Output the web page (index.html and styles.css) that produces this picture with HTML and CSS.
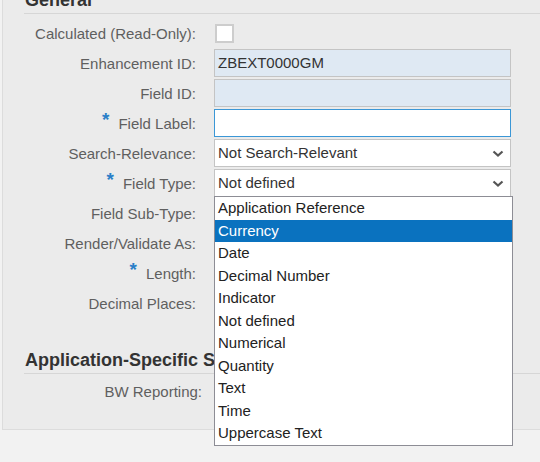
FILE: index.html
```html
<!DOCTYPE html>
<html lang="en">
<head>
    <meta charset="UTF-8">
    <meta name="viewport" content="width=device-width, initial-scale=1.0">
    <title>Extension Field Details</title>
    <link rel="stylesheet" href="styles.css">
</head>
<body>
    <div class="panel">
        <div class="section-title first">General</div>
        <div class="form">
            <div class="label">Calculated (Read-Only):</div>
            <div class="field"><span class="checkbox"></span></div>

            <div class="label">Enhancement ID:</div>
            <div class="field"><div class="input readonly">ZBEXT0000GM</div></div>

            <div class="label">Field ID:</div>
            <div class="field"><div class="input readonly"></div></div>

            <div class="label"><span class="req">*</span>Field Label:</div>
            <div class="field"><div class="input focused"></div></div>

            <div class="label">Search-Relevance:</div>
            <div class="field">
                <div class="input select">Not Search-Relevant
                    <svg class="chevron" width="12" height="8" viewBox="0 0 12 8"><polyline points="1.5,1.5 6,5.5 10.5,1.5" fill="none" stroke="#555" stroke-width="2.2"/></svg>
                </div>
            </div>

            <div class="label"><span class="req">*</span>Field Type:</div>
            <div class="field">
                <div class="input select">Not defined
                    <svg class="chevron" width="12" height="8" viewBox="0 0 12 8"><polyline points="1.5,1.5 6,5.5 10.5,1.5" fill="none" stroke="#555" stroke-width="2.2"/></svg>
                </div>
                <ul class="options">
                    <li>Application Reference</li>
                    <li class="selected">Currency</li>
                    <li>Date</li>
                    <li>Decimal Number</li>
                    <li>Indicator</li>
                    <li>Not defined</li>
                    <li>Numerical</li>
                    <li>Quantity</li>
                    <li>Text</li>
                    <li>Time</li>
                    <li>Uppercase Text</li>
                </ul>
            </div>

            <div class="label">Field Sub-Type:</div>
            <div class="field"></div>

            <div class="label">Render/Validate As:</div>
            <div class="field"></div>

            <div class="label"><span class="req">*</span>Length:</div>
            <div class="field"></div>

            <div class="label">Decimal Places:</div>
            <div class="field"></div>
        </div>

        <div class="section-title second">Application-Specific Settings</div>
        <div class="form">
            <div class="label wide">BW Reporting:</div>
            <div class="field"></div>
        </div>
    </div>
</body>
</html>
```

FILE: styles.css
```css
html, body {
    margin: 0;
    padding: 0;
}

body {
    background-color: #f2f2f2;
    font-family: "Liberation Sans", Arial, sans-serif;
    font-size: 15px;
    color: #333;
    height: 462px;
    overflow: hidden;
}

.panel {
    margin-left: 2px;
    height: 440px;
    box-sizing: border-box;
    background-color: #ebebeb;
    border-left: 1px solid #dcdcdc;
    border-bottom: 1px solid #dcdcdc;
    padding-left: 21px;
}

.section-title {
    font-size: 18px;
    font-weight: bold;
    color: #333;
    line-height: 20px;
    padding-left: 1px;
    padding-bottom: 3px;
    border-bottom: 1px solid #d6d6d6;
    white-space: nowrap;
}

.section-title.first {
    margin-top: -10px;
}

.section-title.second {
    margin-top: 32px;
}

.form {
    display: grid;
    grid-template-columns: 172px 299px;
    column-gap: 18px;
    grid-auto-rows: 30px;
    margin-top: 4px;
}

.section-title.second + .form {
    margin-top: 2px;
}

.label {
    display: flex;
    align-items: center;
    justify-content: flex-end;
    color: #5f5f5f;
    white-space: nowrap;
}

.label.wide {
    margin-right: -6px;
}

.req {
    color: #2a7fc8;
    font-weight: bold;
    font-size: 19px;
    margin-right: 9px;
    position: relative;
    top: -3px;
}

.field {
    position: relative;
    display: flex;
    align-items: center;
}

.checkbox {
    width: 15px;
    height: 15px;
    margin-left: 1px;
    background: #fff;
    border: 2px solid #cdcdcd;
}

.input {
    width: 297px;
    height: 28px;
    box-sizing: border-box;
    border: 1px solid #c4c4c4;
    background: #fff;
    padding-left: 3px;
    line-height: 26px;
    color: #333;
}

.input.readonly {
    background: #dfe9f3;
}

.input.focused {
    border-color: #3b97d6;
}

.input.select {
    position: relative;
}

.chevron {
    position: absolute;
    right: 6px;
    top: 10px;
}

.options {
    position: absolute;
    top: 28px;
    left: 0;
    width: 299px;
    box-sizing: border-box;
    margin: 0;
    padding: 0;
    list-style: none;
    background: #fff;
    border: 1px solid #8d8d95;
    z-index: 5;
}

.options li {
    height: 22.5px;
    line-height: 22px;
    padding-left: 3px;
    color: #222;
}

.options li.selected {
    background: #0a72bf;
    color: #fff;
}
```
